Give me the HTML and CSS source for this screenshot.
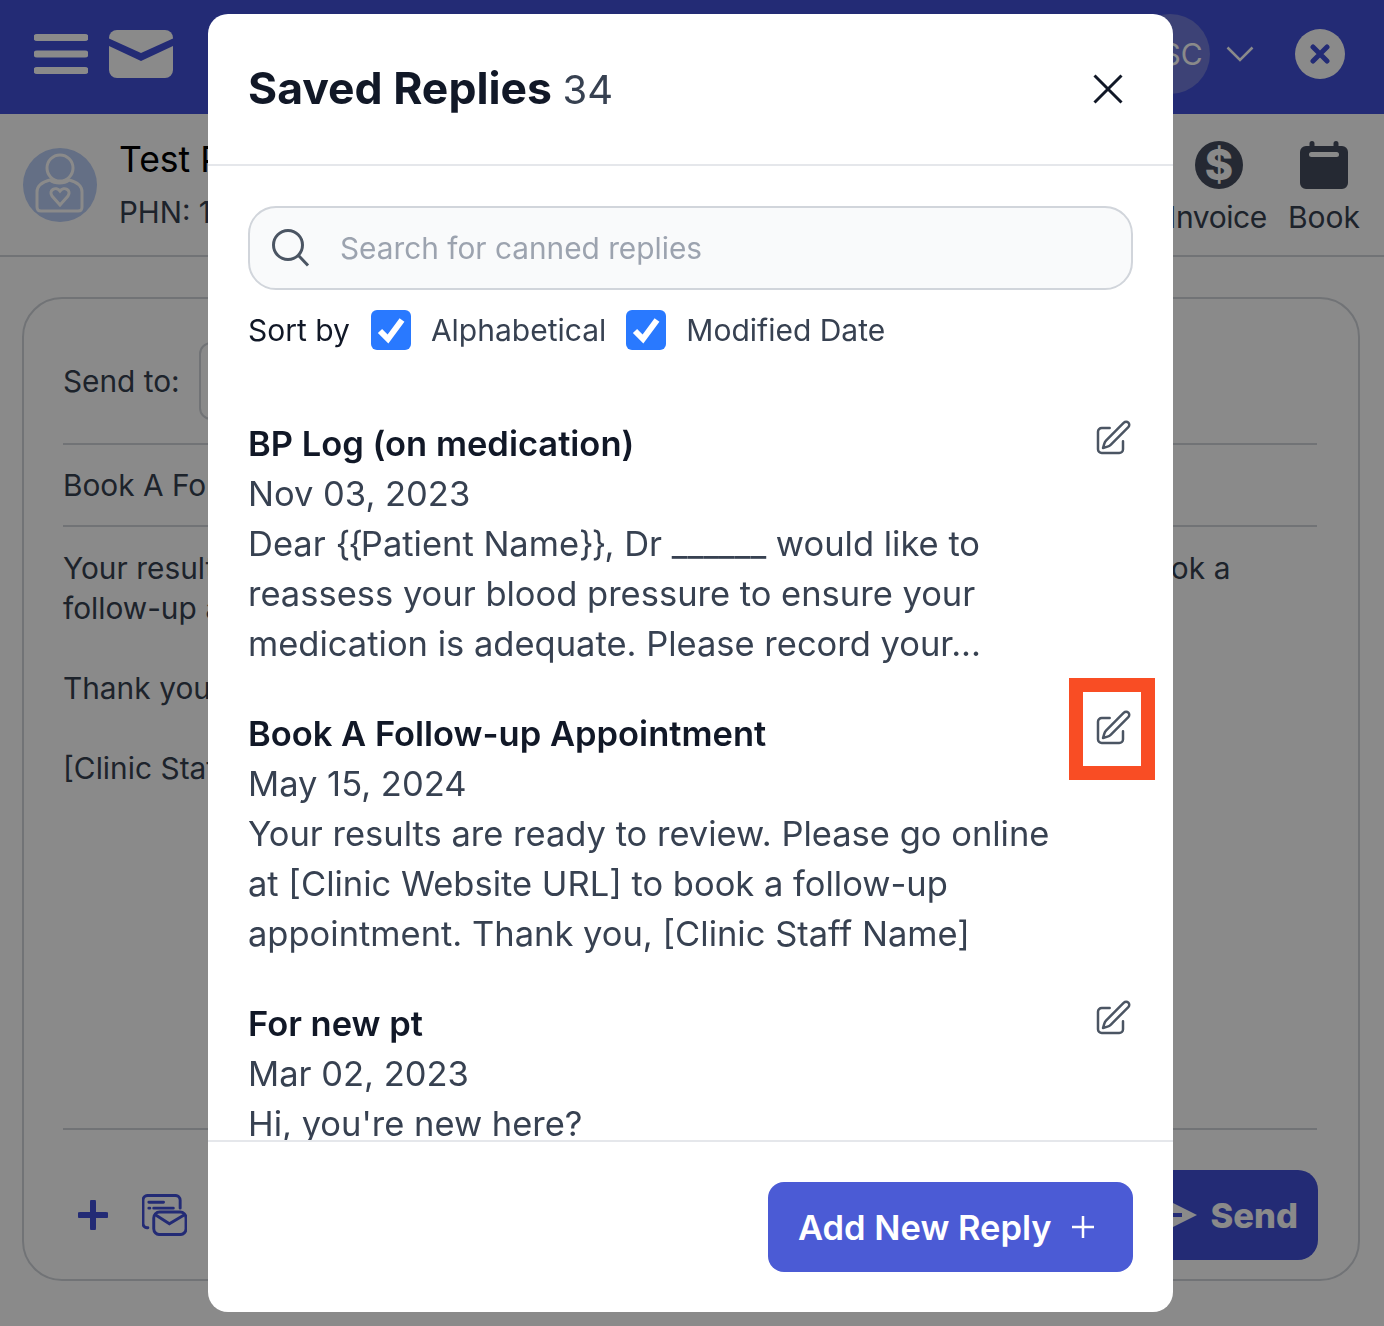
FILE: index.html
```html
<!DOCTYPE html>
<html lang="en">
<head>
    <meta charset="UTF-8">
    <title>Saved Replies</title>
    <link rel="stylesheet" href="styles.css">
</head>
<body>
    <div class="page">
        <header class="topbar">
            <svg class="menu-icon" viewBox="0 0 54 40"><path d="M3 3.500h48M3 20h48M3 36.500h48"/></svg>
            <svg class="mail-icon" viewBox="0 0 64 48"><path d="M8 0h48a8 8 0 0 1 8 8v.500L32 23 0 8.500V8a8 8 0 0 1 8-8Z"/><path d="M0 16l32 15 32-15v24a8 8 0 0 1-8 8H8a8 8 0 0 1-8-8Z"/></svg>
            <div class="topbar-right">
                <div class="user-badge">SC</div>
                <svg class="chevron" viewBox="0 0 28 16"><path d="M1.500 1.500 14 14 26.500 1.500"/></svg>
                <div class="close-circle"><svg viewBox="0 0 20 20"><path d="M3 3l14 14M17 3 3 17"/></svg></div>
            </div>
        </header>

        <section class="patient-bar">
            <div class="patient-avatar">
                <svg viewBox="0 0 74 74"><circle cx="37" cy="20" r="13"/><path d="M27 32c-8 2-13 5-13 12v15c0 3 2 4 4 4h37c3 0 4-1 4-4V44c0-7-5-10-13-12-5 4-14 4-19 0Z"/><path d="M37 57l-8-9c-4-6 4-10 8-5 4-5 12-1 8 5Z"/></svg>
            </div>
            <div class="patient-info">
                <div class="patient-name">Test Patient</div>
                <div class="patient-phn">PHN: 1234567890</div>
            </div>
            <div class="patient-actions">
                <div class="action action-invoice">
                    <svg class="action-icon" viewBox="0 0 48 48"><circle cx="24" cy="24" r="24"/><text x="24" y="39" class="dollar">$</text></svg>
                    <span>Invoice</span>
                </div>
                <div class="action">
                    <svg class="action-icon" viewBox="0 0 48 48"><path d="M12 0a2.500 2.500 0 0 1 2.500 2.500V5h19V2.500a2.500 2.500 0 0 1 5 0V5H42a6 6 0 0 1 6 6v31a6 6 0 0 1-6 6H6a6 6 0 0 1-6-6V11a6 6 0 0 1 6-6h3.500V2.500A2.500 2.500 0 0 1 12 0Z"/><rect class="cal-slot" x="9" y="11" width="30" height="5" rx="2.500"/></svg>
                    <span>Book</span>
                </div>
            </div>
        </section>

        <main class="compose">
            <div class="compose-to">
                <span>Send to:</span>
                <div class="to-field"></div>
            </div>
            <div class="compose-subject">Book A Follow-up Appointment</div>
            <div class="compose-body">
                <p>Your results are ready to review. Please go online at [Clinic Website URL] to book a<br>follow-up appointment.</p>
                <p>Thank you,</p>
                <p>[Clinic Staff Name]</p>
            </div>
            <div class="compose-foot">
                <svg class="plus-icon" viewBox="0 0 30 30"><path d="M15 2v26M2 15h26"/></svg>
                <svg class="canned-icon" viewBox="0 0 46 42"><path d="M6 34H5a4 4 0 0 1-4-4V6a5 5 0 0 1 5-5h28a5 5 0 0 1 5 5v8"/><path d="M7 8h15M7 14h1M12 14h20"/><rect x="12" y="18" width="33" height="23" rx="6"/><path d="M14 21l14 9 15-9"/></svg>
                <button class="send-button">
                    <svg viewBox="0 0 40 32"><path d="M8 0l32 16L8 32l6-16Z"/><path class="plane-notch" d="M12 16h13"/></svg>
                    Send
                </button>
            </div>
        </main>
    </div>

    <div class="overlay">
        <div class="dialog">
            <div class="dialog-head">
                <h1>Saved Replies <span class="count">34</span></h1>
                <svg class="dialog-close" viewBox="0 0 30 30"><path d="M1.500 1.500l27 27M28.500 1.500l-27 27"/></svg>
            </div>

            <div class="dialog-body">
                <div class="search">
                    <svg class="search-icon" viewBox="0 0 38 38"><circle cx="16" cy="16" r="14.500"/><path d="M26.500 26.500 36 36.500"/></svg>
                    <span>Search for canned replies</span>
                </div>
                <div class="sort-row">
                    <span class="sort-label">Sort by</span>
                    <span class="checkbox"><svg viewBox="0 0 40 40"><path d="M9 21l8 8L31 10"/></svg></span>
                    <span class="sort-option">Alphabetical</span>
                    <span class="checkbox"><svg viewBox="0 0 40 40"><path d="M9 21l8 8L31 10"/></svg></span>
                    <span class="sort-option">Modified Date</span>
                </div>

                <div class="reply-list">
                    <div class="reply">
                        <div class="reply-text">
                            <h3>BP Log (on medication)</h3>
                            <div>Nov 03, 2023</div>
                            <div>Dear <span class="braces">{{</span>Patient Name<span class="braces">}}</span>, Dr ______ would like to reassess your blood pressure to ensure your medication is adequate. Please record your...</div>
                        </div>
                        <svg class="edit-icon" viewBox="0 0 24 24"><path d="M16.862 4.487l1.687-1.688a1.875 1.875 0 1 1 2.652 2.652L10.582 16.070a4.500 4.500 0 0 1-1.897 1.130L6 18l.8-2.685a4.500 4.500 0 0 1 1.130-1.897l8.932-8.931ZM18 14v4.750A2.250 2.250 0 0 1 15.750 21H5.250A2.250 2.250 0 0 1 3 18.750V8.250A2.250 2.250 0 0 1 5.250 6H10"/></svg>
                    </div>
                    <div class="reply">
                        <div class="reply-text">
                            <h3>Book A Follow-up Appointment</h3>
                            <div>May 15, 2024</div>
                            <div>Your results are ready to review. Please go online at [Clinic Website URL] to book a follow-up appointment. Thank you, [Clinic Staff Name]</div>
                        </div>
                        <div class="edit-wrap">
                            <svg class="edit-icon" viewBox="0 0 24 24"><path d="M16.862 4.487l1.687-1.688a1.875 1.875 0 1 1 2.652 2.652L10.582 16.070a4.500 4.500 0 0 1-1.897 1.130L6 18l.8-2.685a4.500 4.500 0 0 1 1.130-1.897l8.932-8.931ZM18 14v4.750A2.250 2.250 0 0 1 15.750 21H5.250A2.250 2.250 0 0 1 3 18.750V8.250A2.250 2.250 0 0 1 5.250 6H10"/></svg>
                            <div class="highlight"></div>
                        </div>
                    </div>
                    <div class="reply">
                        <div class="reply-text">
                            <h3>For new pt</h3>
                            <div>Mar 02, 2023</div>
                            <div>Hi, you're new here?</div>
                        </div>
                        <svg class="edit-icon" viewBox="0 0 24 24"><path d="M16.862 4.487l1.687-1.688a1.875 1.875 0 1 1 2.652 2.652L10.582 16.070a4.500 4.500 0 0 1-1.897 1.130L6 18l.8-2.685a4.500 4.500 0 0 1 1.130-1.897l8.932-8.931ZM18 14v4.750A2.250 2.250 0 0 1 15.750 21H5.250A2.250 2.250 0 0 1 3 18.750V8.250A2.250 2.250 0 0 1 5.250 6H10"/></svg>
                    </div>
                </div>
            </div>

            <div class="dialog-foot">
                <button class="add-button">Add New Reply <svg viewBox="0 0 24 24"><path d="M12 1v22M1 12h22"/></svg></button>
            </div>
        </div>
    </div>
</body>
</html>
```

FILE: styles.css
```css
* {
    box-sizing: border-box;
}
html, body {
    margin: 0;
    height: 100%;
    overflow: hidden;
}
body {
    font-family: Inter, "Liberation Sans", sans-serif;
    background: #fff;
    color: #374151;
}
.page {
    height: 1326px;
    display: flex;
    flex-direction: column;
}

/* top bar */
.topbar {
    height: 114px;
    background: #4150d9;
    display: flex;
    align-items: center;
    padding-left: 34px;
    flex-shrink: 0;
}
.menu-icon {
    width: 54px;
    height: 40px;
    margin-top: -6px;
    fill: none;
    stroke: #fff;
    stroke-width: 7;
    stroke-linecap: round;
}
.mail-icon {
    width: 64px;
    height: 48px;
    margin-left: 21px;
    margin-top: -6px;
    fill: #fff;
}
.topbar-right {
    margin-left: auto;
    display: flex;
    align-items: center;
    padding-right: 39px;
    margin-top: -6px;
}
.user-badge {
    width: 80px;
    height: 80px;
    border-radius: 50%;
    background: #717ada;
    color: #fff;
    font-size: 30px;
    padding-left: 24px;
    display: flex;
    align-items: center;
    justify-content: center;
}
.chevron {
    width: 28px;
    height: 16px;
    margin-left: 16px;
    fill: none;
    stroke: #fff;
    stroke-width: 2.500;
}
.close-circle {
    width: 50px;
    height: 50px;
    margin-left: 41px;
    border-radius: 50%;
    background: #fff;
    display: flex;
    align-items: center;
    justify-content: center;
}
.close-circle svg {
    width: 20px;
    height: 20px;
    fill: none;
    stroke: #4150d9;
    stroke-width: 5;
    stroke-linecap: round;
}

/* patient strip */
.patient-bar {
    height: 143px;
    border-bottom: 2px solid #d1d5db;
    display: flex;
    align-items: center;
    padding: 0 24px 0 23px;
    flex-shrink: 0;
}
.patient-avatar {
    width: 74px;
    height: 74px;
    border-radius: 50%;
    background: #b9cdf5;
    flex-shrink: 0;
}
.patient-avatar svg {
    display: block;
    fill: none;
    stroke: #fff;
    stroke-width: 3;
}
.patient-info {
    margin-left: 22px;
}
.patient-name {
    font-size: 35.500px;
    line-height: 44px;
    color: #000;
}
.patient-phn {
    font-size: 29.500px;
    line-height: 40px;
    margin-top: 10px;
}
.patient-actions {
    margin-left: auto;
    margin-top: 6px;
    display: flex;
    gap: 21px;
}
.action {
    display: flex;
    flex-direction: column;
    align-items: center;
    gap: 10px;
    font-size: 30px;
    line-height: 36px;
    color: #374151;
}
.action-icon {
    width: 48px;
    height: 48px;
    fill: #454d5e;
}
.action-invoice span {
    letter-spacing: -0.400px;
}
.action-invoice .action-icon {
    margin-left: 2px;
}
.dollar {
    fill: #fff;
    font-size: 43px;
    font-weight: 800;
    text-anchor: middle;
}
.cal-slot {
    fill: #fff;
}

/* message card behind the dialog */
.compose {
    margin: 40px 24px 45px 22px;
    flex: 1;
    border: 2px solid #d1d5db;
    border-radius: 40px;
    padding: 0 41px 0 39px;
    display: flex;
    flex-direction: column;
    font-size: 29.800px;
    line-height: 40px;
}
.compose-to {
    height: 146px;
    padding-top: 20px;
    border-bottom: 2px solid #d1d5db;
    display: flex;
    align-items: center;
    gap: 19px;
}
.to-field {
    width: 300px;
    height: 78px;
    border: 2px solid #d1d5db;
    border-radius: 12px;
}
.compose-subject {
    height: 82px;
    border-bottom: 2px solid #d1d5db;
    display: flex;
    align-items: center;
}
.compose-body {
    flex: 1;
    padding-top: 21px;
    border-bottom: 2px solid #d1d5db;
}
.compose-body p {
    margin: 0 0 40px;
    word-spacing: 0.300px;
}
.compose-foot {
    height: 149px;
    padding: 21px 0 0 15px;
    display: flex;
    align-items: center;
    flex-shrink: 0;
}
.plus-icon {
    width: 30px;
    height: 30px;
    fill: none;
    stroke: #4150d9;
    stroke-width: 6;
    stroke-linecap: round;
}
.canned-icon {
    width: 45px;
    height: 42px;
    margin-left: 34px;
    fill: none;
    stroke: #4150d9;
    stroke-width: 3;
    stroke-linecap: round;
}
.send-button {
    margin-left: auto;
    margin-right: -1px;
    height: 90px;
    width: 260px;
    border: none;
    border-radius: 20px;
    background: #4150d9;
    color: #fff;
    font-family: inherit;
    font-size: 34.500px;
    font-weight: 800;
    display: flex;
    align-items: center;
    justify-content: flex-end;
    gap: 14px;
    padding: 0 20px;
}
.send-button svg {
    width: 40px;
    height: 32px;
    fill: #fff;
}
.plane-notch {
    stroke: #4150d9;
    stroke-width: 4;
}

/* dialog */
.overlay {
    position: fixed;
    inset: 0;
    background: rgba(0,0,0,0.46);
    padding: 14px 211px 14px 208px;
}
.dialog {
    height: 100%;
    background: #fff;
    border-radius: 20px;
    display: flex;
    flex-direction: column;
    overflow: hidden;
}
.dialog-head {
    height: 152px;
    border-bottom: 2px solid #e5e7eb;
    display: flex;
    align-items: center;
    justify-content: space-between;
    padding: 0 50px 0 40px;
    flex-shrink: 0;
}
h1 {
    margin: 0;
    font-size: 44.500px;
    line-height: 52px;
    font-weight: 700;
    color: #111827;
}
.count {
    font-size: 40px;
    font-weight: 400;
    color: #374151;
}
.dialog-close {
    width: 30px;
    height: 30px;
    fill: none;
    stroke: #111827;
    stroke-width: 3;
}
.dialog-body {
    flex: 1;
    min-height: 0;
    overflow: hidden;
    padding: 40px 40px 0;
}
.search {
    height: 84px;
    border: 2px solid #d1d5db;
    border-radius: 28px;
    background: #f9fafb;
    display: flex;
    align-items: center;
    padding-left: 22px;
    font-size: 29.800px;
    color: #9ca3af;
}
.search-icon {
    width: 38px;
    height: 38px;
    margin-right: 30px;
    fill: none;
    stroke: #4b5563;
    stroke-width: 3;
}
.sort-row {
    margin-top: 20px;
    height: 40px;
    display: flex;
    align-items: center;
    font-size: 30px;
}
.sort-label {
    color: #111827;
    margin-right: 21px;
}
.checkbox {
    width: 40px;
    height: 40px;
    border-radius: 6px;
    background: #2979ff;
    margin-right: 20px;
    flex-shrink: 0;
}
.checkbox svg {
    display: block;
    fill: none;
    stroke: #fff;
    stroke-width: 6;
}
.sort-option {
    margin-right: 20px;
}
.reply-list {
    margin-top: 69px;
    display: flex;
    flex-direction: column;
    gap: 40px;
}
.reply {
    display: flex;
    justify-content: space-between;
    font-size: 34.500px;
    line-height: 50px;
}
.reply-text {
    width: 810px;
}
.reply-text h3 {
    margin: 0;
    font-size: 34.500px;
    font-weight: 600;
    color: #111827;
}
.braces {
    letter-spacing: -2px;
}
.edit-icon {
    width: 40px;
    height: 40px;
    margin: -1px 0 0 0;
    fill: none;
    stroke: #4b5563;
    stroke-width: 1.500;
    stroke-linecap: round;
    stroke-linejoin: round;
    flex-shrink: 0;
}
.edit-wrap {
    position: relative;
    height: 40px;
}
.highlight {
    position: absolute;
    left: -24px;
    top: -31px;
    width: 86px;
    height: 102px;
    border: 14px solid #f94d24;
}

.dialog-foot {
    height: 172px;
    border-top: 2px solid #e5e7eb;
    display: flex;
    justify-content: flex-end;
    align-items: flex-start;
    padding: 40px 40px 0;
    flex-shrink: 0;
}
.add-button {
    width: 365px;
    height: 90px;
    border: none;
    border-radius: 16px;
    background: #4b5bd5;
    color: #fff;
    font-family: inherit;
    font-size: 34.500px;
    font-weight: 600;
    display: flex;
    align-items: center;
    gap: 19px;
    padding: 0 0 0 30px;
}
.add-button svg {
    width: 24px;
    height: 24px;
    fill: none;
    stroke: #fff;
    stroke-width: 2.500;
}
```
